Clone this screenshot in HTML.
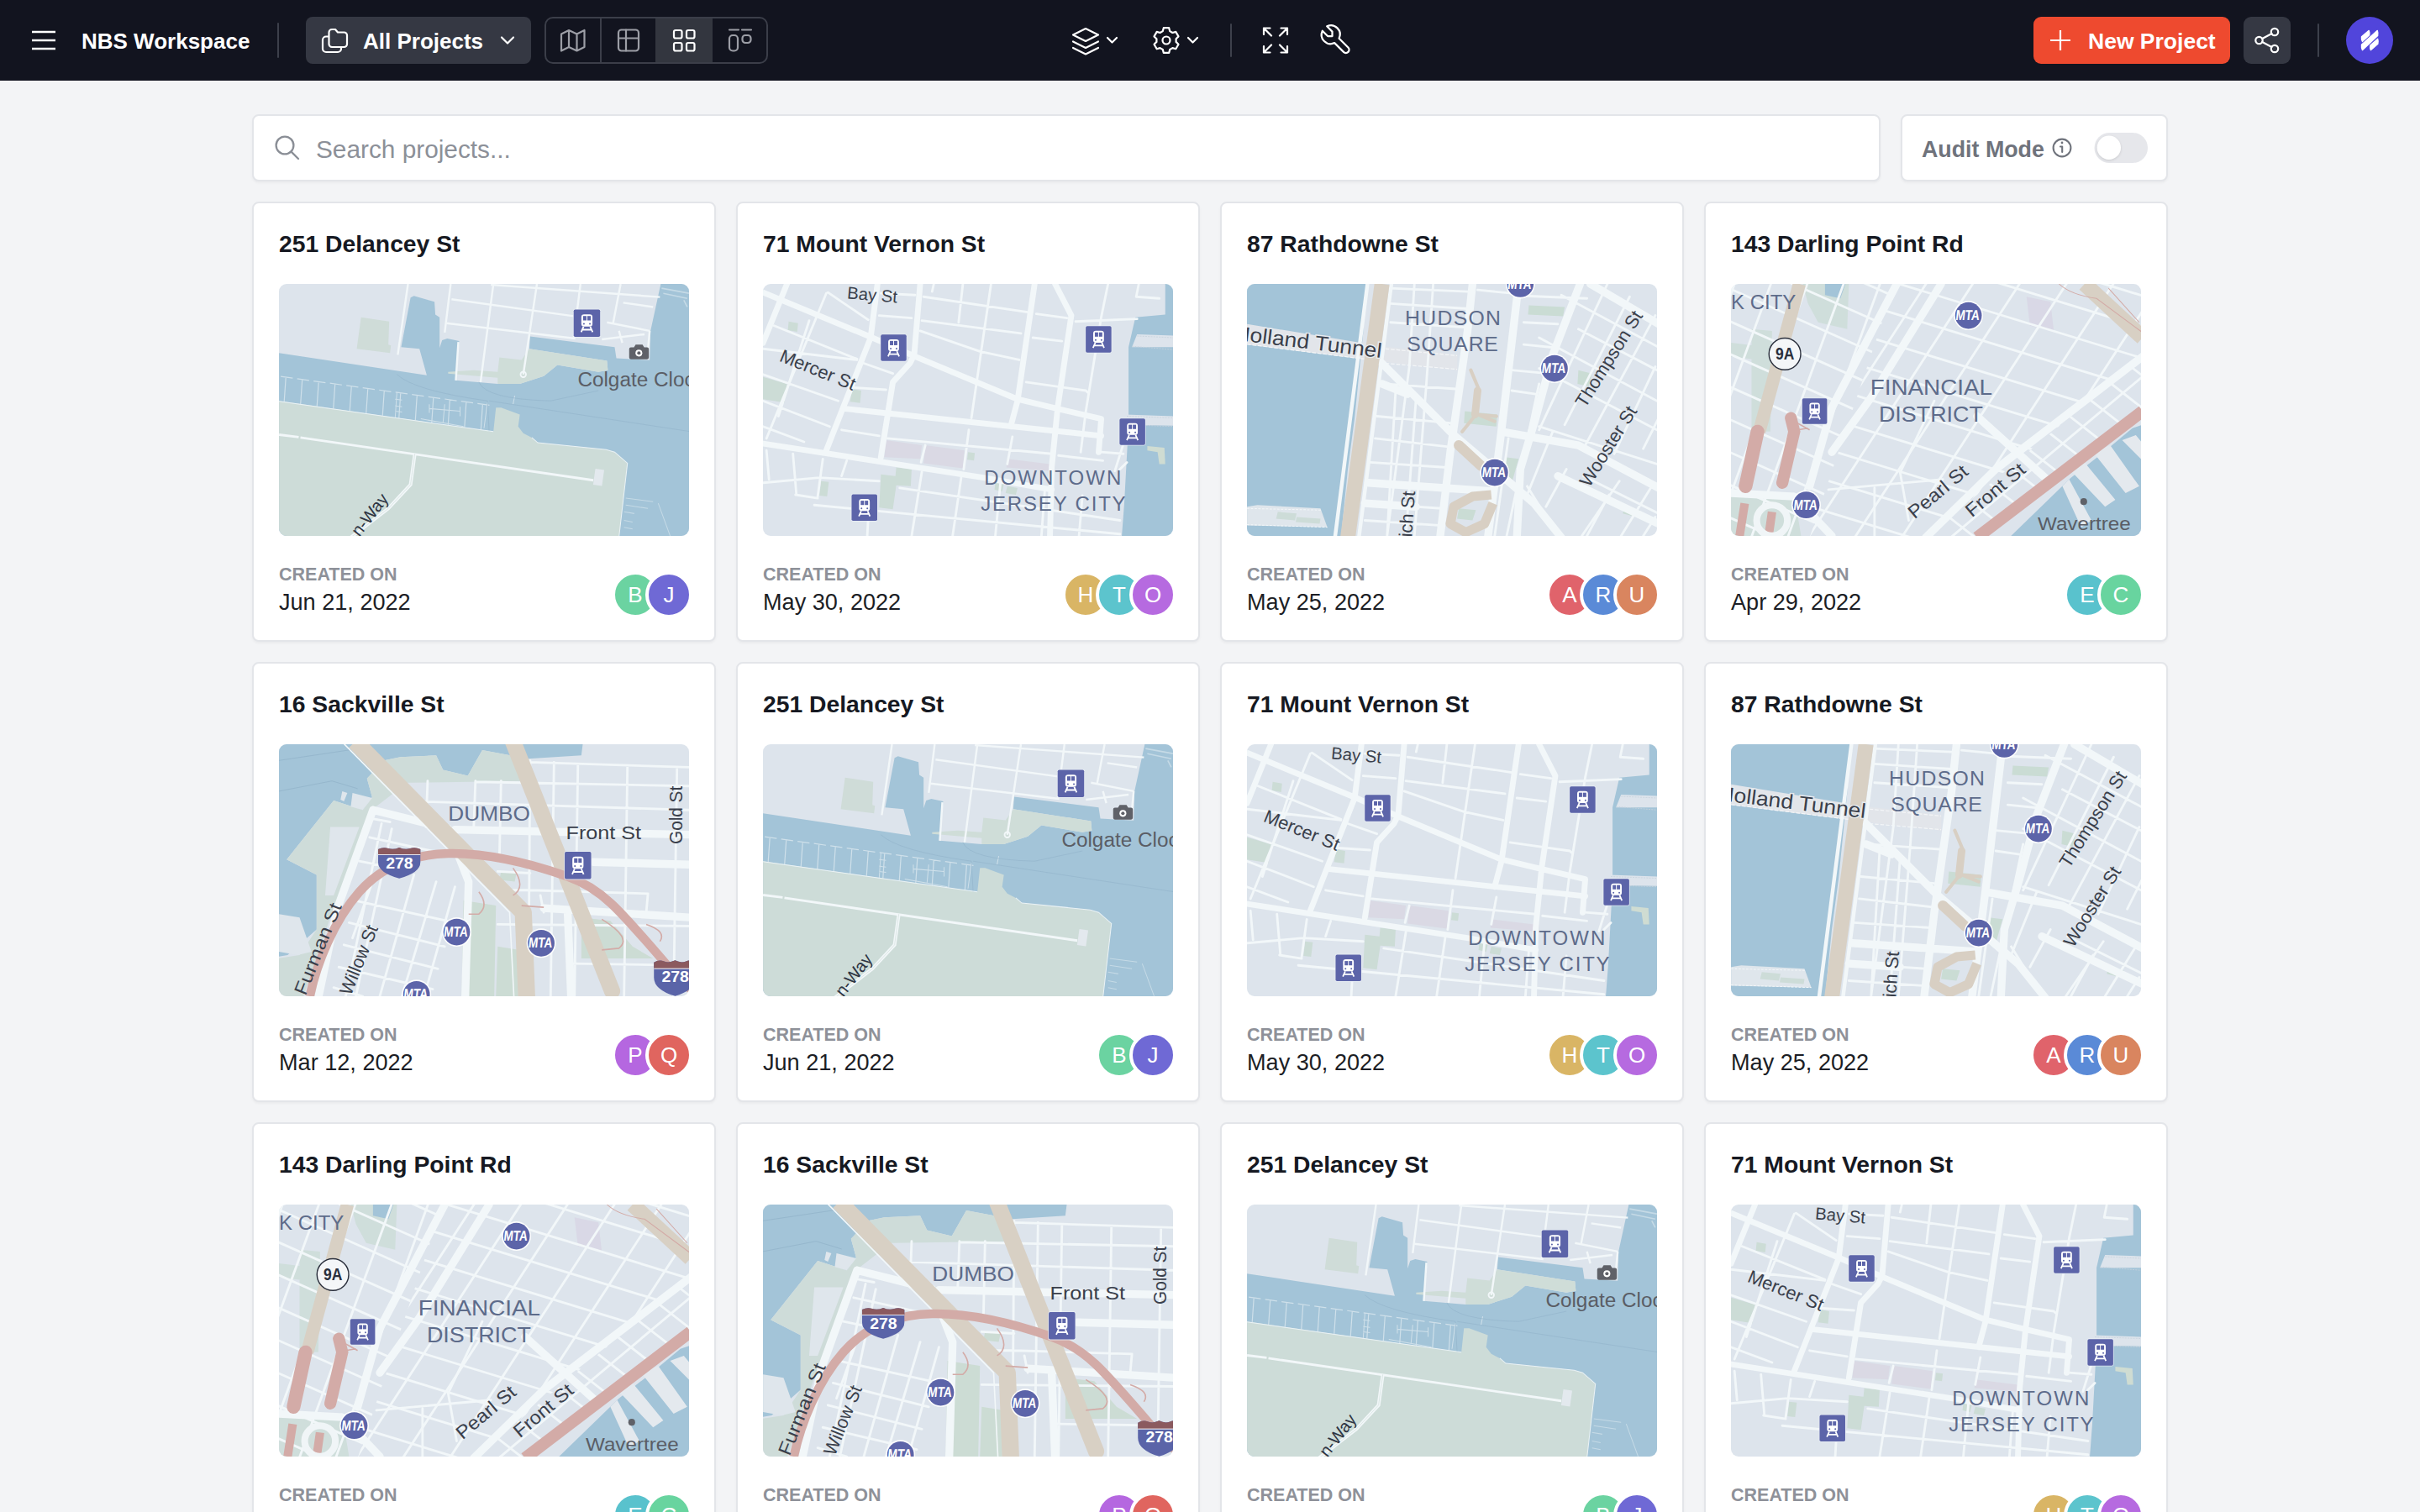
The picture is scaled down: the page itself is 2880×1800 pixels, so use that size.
<!DOCTYPE html>
<html><head><meta charset="utf-8"><style>
*{box-sizing:border-box;margin:0;padding:0}
html,body{width:2880px;height:1800px;overflow:hidden;background:#f3f4f6;font-family:"Liberation Sans", sans-serif;}
.hdr{position:absolute;left:0;top:0;width:2880px;height:96px;background:#12141f;}
.abs{position:absolute}
@media (max-width: 2000px) { html { zoom: 0.5; } }
.card{position:absolute;width:552px;height:524px;background:#fff;border:2px solid #e3e5e9;border-radius:8px;box-shadow:0 2px 3px rgba(0,0,0,0.04);}
.ttl{position:absolute;left:30px;top:27.5px;font-size:28.3px;font-weight:700;color:#161922;line-height:40px;white-space:nowrap;}
.map{position:absolute;left:30px;top:96px;width:488px;height:300px;border-radius:9px;overflow:hidden;}
.map svg{display:block}
.lbl{position:absolute;left:30px;top:428px;font-size:21.5px;font-weight:700;color:#8e9199;line-height:28px;letter-spacing:0px;white-space:nowrap}
.date{position:absolute;left:30px;top:458px;font-size:27.1px;color:#1c1e25;line-height:34px;white-space:nowrap}
.avs{position:absolute;right:26px;top:442px;height:48px;display:flex;}
.av{width:56px;height:56px;border-radius:50%;border:4px solid #fff;margin-left:-16px;color:#fff;font-size:26px;line-height:48px;text-align:center;margin-top:-4px}
.av:first-child{margin-left:0}
</style></head>
<body>
<svg width="0" height="0" style="position:absolute"><defs><symbol id="ic-train" viewBox="0 0 155 160" overflow="visible">
<rect x="-4" y="-4" width="163" height="168" rx="12" fill="#e8eef5" opacity="0.8"/>
<rect x="0" y="0" width="155" height="160" rx="9" fill="#5c64a9"/>
<rect x="45" y="28" width="65" height="72" rx="16" fill="#fff"/>
<rect x="55" y="38" width="20" height="26" fill="#5c64a9"/><rect x="80" y="38" width="20" height="26" fill="#5c64a9"/>
<circle cx="60" cy="84" r="5" fill="#5c64a9"/><circle cx="95" cy="84" r="5" fill="#5c64a9"/>
<path d="M58 100L44 132M97 100L111 132M50 118H105" stroke="#fff" stroke-width="9" fill="none"/>
</symbol><symbol id="ic-mta" viewBox="-90 -90 180 180" overflow="visible">
<circle r="86" fill="#fff" opacity="0.9"/><circle r="78" fill="#5c64a9"/>
<text x="-4" y="28" font-size="84" font-weight="700" fill="#fff" font-family="Liberation Sans" text-anchor="middle" textLength="140" lengthAdjust="spacingAndGlyphs" transform="skewX(-6)">MTA</text>
</symbol><symbol id="ic-cam" viewBox="0 0 115 90" overflow="visible">
<path d="M0 28a10 10 0 0 1 10-10h18l10-16h40l10 16h17a10 10 0 0 1 10 10v50a10 10 0 0 1-10 10h-95a10 10 0 0 1-10-10z" fill="#5f6168"/>
<circle cx="57" cy="52" r="20" fill="#fff"/><circle cx="57" cy="52" r="10" fill="#5f6168"/>
</symbol><symbol id="mapA" viewBox="10 15 2400 1476"><rect x="0" y="0" width="2420" height="1500" fill="#dde4ec"/><path fill="#a3c4d8" d="M10 420L875 550L832 395L725 385L780 95L800 85L825 92L920 120L925 195L950 210L950 390L965 345L995 335L1065 350L1045 580L1290 600L1420 600L1560 555L1640 490L1880 530L1935 520L1930 465L1475 395L1480 322L1975 385L1985 450L2180 462L2185 290L2245 15L2420 15L2420 1500L10 1500Z"/><path fill="#cddcd8" d="M10 700L1265 880L1280 740L1310 740L1420 780L1410 850L1440 890L1490 915L1525 945L1925 985L1975 1000L2050 1065L2000 1500L10 1500Z"/><path fill="#cfddd8" d="M1000 540L1290 565L1290 600L1420 600L1560 555L1640 490L1880 530L1935 520L1930 465L1475 395L1430 460L1300 445L1290 530L1150 520L1000 530Z"/><path fill="#cfdcd8" d="M490 210L655 235L650 370L665 375L660 420L465 395Z"/><path d="M50 560.0L40 705.0M20 557.0L90 567.0M146 573.2L136 718.6M116 570.2L186 580.2M242 586.4L232 732.2M212 583.4L282 593.4M338 599.6L328 745.8M308 596.6L378 606.6M434 612.8L424 759.4M404 609.8L474 619.8M530 626.0L520 773.0M500 623.0L570 633.0M626 639.2L616 786.6M596 636.2L666 646.2M722 652.4L712 800.2M692 649.4L762 659.4M818 665.6L808 813.8M788 662.6L858 672.6M914 678.8L904 827.4M884 675.8L954 685.8M1010 692.0L1000 841.0M980 689.0L1050 699.0M1106 705.2L1096 854.6M1076 702.2L1146 712.2M1202 718.4L1192 868.2M1172 715.4L1242 725.4" stroke="#cfe0ea" stroke-width="6" fill="none"/><path d="M890 745L1070 760M890 720V770M1070 735V790M980 720L970 830M840 805L1090 850M1230 710L1210 860M1390 670L1380 720M700 650L690 800M690 690L730 695M690 730L730 735M690 760L730 765" stroke="#cfe0ea" stroke-width="5" fill="none"/><path d="M700 545Q800 640 1230 700L1240 880M1180 590Q1220 690 1600 700L1880 640M1240 700L2420 880" stroke="#93b4ca" stroke-width="3" fill="none"/><path d="M10 703L1265 880M1490 915L1525 945L1925 985L1975 1000L2050 1065L2000 1500" stroke="#eaf2f5" stroke-width="5" fill="none"/><g stroke="#f2f7f9" stroke-width="12" fill="none"><path d="M765 15L705 430M1015 15L980 300M1265 15L1190 590M1520 15L1440 545M1775 15L1735 330M2010 15L1965 250"/><path d="M1250 20L2240 92M1020 105L1745 205M990 245L1745 335M2025 125L2200 150M1930 240L2180 290M1900 340L2150 310M2000 290L2020 360"/><path d="M2180 290L2165 455M1045 580L1060 355"/></g><path d="M10 898L125 912M135 915L1850 1165" stroke="#f2f7f9" stroke-width="14" fill="none"/><rect x="1855" y="1100" width="52" height="95" fill="#e3e9ee" transform="rotate(8 1880 1150)"/><path d="M805 1010L780 1190L650 1330L430 1500" stroke="#f2f7f9" stroke-width="20" fill="none"/><path d="M805 1010L780 1190L650 1330L430 1500" stroke="#d8e4e2" stroke-width="4" fill="none"/><circle cx="1440" cy="545" r="16" fill="none" stroke="#f2f7f9" stroke-width="9"/><path d="M2040 1270L2200 1290M2040 1310L2170 1330M2030 1350L2090 1360M2030 1400L2080 1410M2030 1440L2080 1450M2230 1300L2300 1491" stroke="#c5dae6" stroke-width="5" fill="none"/><path d="M2250 40L2410 70M2260 70L2400 100M2380 110L2400 150" stroke="#c5dae6" stroke-width="8" fill="none"/><use href="#ic-train" x="1735" y="165" width="155" height="160"/><use href="#ic-cam" x="2060" y="368" width="115" height="90"/><text x="1758" y="617" font-size="116" fill="#5a5d65" font-family="Liberation Sans" textLength="745" lengthAdjust="spacingAndGlyphs">Colgate Clock</text><text transform="translate(480 1500) rotate(-52)" font-size="100" fill="#2e3442" font-family="Liberation Sans">n-Way</text></symbol><symbol id="mapB" viewBox="10 15 2400 1476"><rect x="0" y="0" width="2420" height="1500" fill="#dde4ec"/><path fill="#a3c4d8" d="M2365 15L2420 15L2420 1500L2110 1500L2125 1300L2150 840L2150 385L2190 210L2365 195Z"/><path fill="#dde4ec" d="M2200 310L2420 318L2420 385L2170 385Z M2130 780L2420 790L2420 845L2125 840Z"/><path fill="#cfdcd2" d="M2260 965L2360 975L2365 1070L2330 1070L2320 1000L2260 990Z"/><path d="M2200 320L2410 330M2170 380L2410 400M2140 790L2410 800M2140 840L2410 850" stroke="#c8d3dc" stroke-width="4" stroke-dasharray="10 6" fill="none"/><path fill="#ccdcd6" d="M160 235L215 245L210 295L155 285Z M10 560L150 600L135 710L10 690Z M530 630L585 640L578 712L520 705Z M700 1130L785 1140L790 1090L880 1100L875 1200L790 1195L770 1335L690 1325Z M1210 1000L1250 1005L1245 1050L1205 1045Z M350 1170L395 1175L385 1260L340 1255Z M1370 1180L1420 1190L1410 1230L1365 1220Z M1440 1200L1500 1210L1490 1250L1430 1240Z"/><path fill="#dad9e4" d="M730 930L940 960L930 1040L720 1030Z M960 960L1190 990L1180 1095L950 1065Z M1440 1040L1690 1070L1680 1110L1435 1090Z"/><path d="M390 65L625 225M380 70L30 920M280 230L100 790M75 260L560 455M10 395L560 460M10 545L450 700M10 700L400 850M10 850L250 940M30 990L45 1160M185 1010L205 1245M360 1040L330 1260M500 1050L470 1140M10 1180L340 1150L690 1170M200 1250L330 1270M1180 15L1155 240M1345 15L1230 800M1010 15L1000 60M2030 15L1990 210L1900 760L1870 1000M2210 15L2195 90L2330 100M700 70L900 80M950 90L1560 180M1610 190L1790 215M1840 235L2200 220M690 200L880 215M940 230L1520 305M1590 330L1760 350M1280 410L1510 460M930 290L1280 410M1550 590L1900 640M1900 640L1910 650M740 920L1700 1010M1740 1020L2000 1050M470 870L690 905M600 480L770 540M510 620L730 635M960 960L935 1060M1215 870L1185 1100M1470 910L1440 1070M810 1210L2100 1400M940 1115L880 1491M1170 1150L1120 1491M1400 1180L1370 1491M1660 1220L1640 1491M1880 1255L1860 1491M630 1310L620 1491M310 1310L2100 1480M2100 1100L2140 1060M1990 1000L2120 1010M2070 1110L2130 920" stroke="#f2f7f9" stroke-width="14" fill="none" stroke-linejoin="round" stroke-linecap="round"/><path d="M150 15L10 360M10 65L650 330L900 440L1500 690L1730 745L1990 805L1975 1000M480 745L1990 905M10 950L1300 1150L1700 1220M930 15L895 430L870 480L770 590L700 1030M680 15L640 330L380 990M1600 15L1500 700L1460 850M1720 15L1815 200L1735 740L1700 1090L1690 1491" stroke="#f2f7f9" stroke-width="34" fill="none" stroke-linejoin="round" stroke-linecap="round"/><use href="#ic-train" x="697" y="312" width="155" height="155"/><use href="#ic-train" x="1897" y="262" width="155" height="155"/><use href="#ic-train" x="2095" y="803" width="155" height="155"/><use href="#ic-train" x="526" y="1248" width="155" height="155"/><text x="500" y="100" font-size="100" fill="#3a3f4b" font-family="Liberation Sans" transform="rotate(5 500 100)">Bay St</text><text x="100" y="465" font-size="108" fill="#3a3f4b" font-family="Liberation Sans" transform="rotate(22 100 465)">Mercer St</text><text x="1305" y="1190" font-size="118" fill="#5d6b8a" font-family="Liberation Sans" letter-spacing="10">DOWNTOWN</text><text x="1285" y="1345" font-size="118" fill="#5d6b8a" font-family="Liberation Sans" letter-spacing="9">JERSEY CITY</text></symbol><symbol id="mapC" viewBox="10 15 2400 1476"><rect x="0" y="0" width="2420" height="1500" fill="#dde4ec"/><path fill="#a3c4d8" d="M0 0L705 15L690 300L660 600L640 800L600 1100L560 1500L0 1500Z"/><path fill="#dfe6ec" d="M10 1320L70 1310L440 1330L480 1440L10 1430Z"/><path fill="#cddcd8" d="M190 1350L300 1360L290 1400L180 1390Z M300 1380L440 1390L435 1420L295 1410Z"/><path d="M10 1330L450 1340M10 1425L480 1440" stroke="#f2f6f8" stroke-width="5" stroke-dasharray="14 8" fill="none"/><path fill="#e2e5ea" d="M10 250L800 380L1240 430L1240 520L800 470L10 370Z"/><path d="M10 368L800 468M820 395L1240 435M820 480L1240 515" stroke="#f3f5f7" stroke-width="6" stroke-dasharray="22 10" fill="none"/><path fill="#cadcd4" d="M1660 140L1870 150L1860 205L1655 195Z M1950 520L2030 540L2010 615L1945 600Z M1285 760L1475 780L1470 850L1280 830Z M1520 1030L1600 1040L1560 1180L1510 1170Z M1250 1330L1350 1340L1330 1400L1240 1390Z M2220 1320L2310 1340L2290 1380L2210 1360Z"/><path d="M990 15L960 500L830 1491M1100 15L1060 600L990 1491M880 640L830 1491M1000 680L940 1491M845 40L1300 60M1360 50L1560 70M1630 85L2000 100M850 130L1300 160M850 240L1300 270M1630 240L1830 250M1630 370L1830 390M1560 520L1770 540M1560 640L1700 660M810 600L1230 630M770 790L1200 830M760 920L1200 970M730 1060L1180 1090M700 1300L1150 1330M700 1400L1150 1430M1720 600L1530 1491M1800 880L1650 1250M1540 920L1460 1491M2120 15L1720 870M2250 90L1870 840M2400 200L1990 960M2400 500L2160 1010M2420 800L2330 980M1850 80L2410 380M1950 280L2410 520M1720 330L2410 700M1720 510L2410 870M1720 850L2410 1070M1980 1140L2420 1360M2190 1170L1970 1491M2380 1200L2200 1491M1650 1200L1830 1491M1880 1100L1760 1320M2130 1250L2000 1491M2400 1380L2330 1491" stroke="#f2f7f9" stroke-width="14" fill="none" stroke-linejoin="round" stroke-linecap="round"/><path d="M800 480L1220 900L1480 1120L1690 1300L1850 1500M800 600L950 660M1330 15L1300 300L1200 1000L1140 1500M1600 15L1500 870L1420 1500M1960 15L1800 430L1700 800L1610 1100L1590 1500M2020 15L2420 250M1500 880L1950 960L2420 1210M1830 1140L2420 1420M720 1180L1450 1230M700 1300L1000 1320" stroke="#f2f7f9" stroke-width="46" fill="none" stroke-linejoin="round" stroke-linecap="round"/><path d="M855 15L665 1500M715 15L525 1500" stroke="#f2f7f9" stroke-width="22" fill="none" stroke-linejoin="round" stroke-linecap="round"/><path d="M800 15L600 1500" stroke="#d8d0c4" stroke-width="88" fill="none"/><path d="M1320 520L1370 640L1350 780L1270 880M1240 960L1380 1080M1360 780L1460 820M1350 780L1470 790" stroke="#d8cfc3" stroke-width="20" fill="none" stroke-linecap="round"/><path d="M1360 640L1345 780" stroke="#d8cfc3" stroke-width="44" fill="none" stroke-linecap="round"/><path d="M1250 960L1380 1080" stroke="#d8cfc3" stroke-width="60" fill="none" stroke-linecap="round"/><path d="M1440 1250L1330 1260L1220 1320L1200 1420L1290 1470L1400 1420L1450 1300" stroke="#d8cfc3" stroke-width="55" fill="none" stroke-linejoin="round"/><use href="#ic-mta" x="1720" y="420" width="180" height="180"/><use href="#ic-mta" x="1370" y="1030" width="180" height="180"/><use href="#ic-mta" x="1520" y="-75" width="180" height="180"/><text x="935" y="255" font-size="122" fill="#5d6b8a" font-family="Liberation Sans" textLength="560" lengthAdjust="spacing">HUDSON</text><text x="945" y="410" font-size="122" fill="#5d6b8a" font-family="Liberation Sans" textLength="535" lengthAdjust="spacing">SQUARE</text><text x="-70" y="342" font-size="120" fill="#3a3f4b" font-family="Liberation Sans" transform="rotate(7 -70 342)" textLength="870" lengthAdjust="spacingAndGlyphs" stroke="#e6eaee" stroke-width="14" paint-order="stroke">Holland Tunnel</text><text x="1990" y="745" font-size="108" fill="#3a3f4b" font-family="Liberation Sans" transform="rotate(-58 1990 745)">Thompson St</text><text x="2015" y="1210" font-size="108" fill="#3a3f4b" font-family="Liberation Sans" transform="rotate(-58 2015 1210)">Wooster St</text><text x="975" y="1500" font-size="108" fill="#3a3f4b" font-family="Liberation Sans" transform="rotate(-86 975 1500)">ich St</text></symbol><symbol id="mapD" viewBox="10 15 2400 1476"><rect x="0" y="0" width="2420" height="1500" fill="#dde4ec"/><path fill="#cfdedb" d="M430 15L700 15L690 280L520 240L460 130Z M130 280L250 290L240 880L130 880Z M10 360L180 380L170 460L10 440Z M10 1240L380 1250L420 1491L10 1491Z"/><path fill="#a3c4d8" d="M560 15L680 15L650 100L560 80Z"/><path fill="#d9d8e6" d="M1740 90L1880 120L1900 290L1760 260Z"/><path fill="#a3c4d8" d="M1640 1500L2000 1150L2180 1010L2360 860L2420 840L2420 1500Z"/><path fill="#e4e9ee" d="M2000 1110L2080 1060L2260 1280L2200 1320Z M2130 1000L2230 960L2400 1200L2320 1240Z M2300 930L2380 900L2420 950L2420 1050Z M1990 1160L2120 1400L2060 1440L1950 1200Z"/><clipPath id="gc1"><path d="M0 0L975 0L470 1500L0 1500Z"/></clipPath><g clip-path="url(#gc1)"><path d="M597 -5248L6078 -2808M525 -5088L6007 -2648M454 -4928L5936 -2488M383 -4768L5864 -2328M312 -4609L5793 -2168M241 -4449L5722 -2008M170 -4289L5651 -1848M98 -4129L5580 -1689M27 -3969L5508 -1529M-44 -3809L5437 -1369M-115 -3649L5366 -1209M-186 -3489L5295 -1049M-258 -3330L5224 -889M-329 -3170L5153 -729M-400 -3010L5081 -569M-471 -2850L5010 -410M-542 -2690L4939 -250M-613 -2530L4868 -90M-685 -2370L4797 70M-756 -2211L4725 230M-827 -2051L4654 390M-898 -1891L4583 550M-969 -1731L4512 710M-1041 -1571L4441 869M-1112 -1411L4370 1029M-1183 -1251L4298 1189M-1254 -1091L4227 1349M-1325 -932L4156 1509M-1396 -772L4085 1669M-1468 -612L4014 1829M-1539 -452L3943 1988M-1610 -292L3871 2148M-1681 -132L3800 2308M-1752 28L3729 2468M-1823 188L3658 2628M-1895 347L3587 2788M-1966 507L3515 2948M-2037 667L3444 3108M-2108 827L3373 3267M-2179 987L3302 3427M-2251 1147L3231 3587M-2322 1307L3160 3747M-2393 1467L3088 3907M-2464 1626L3017 4067M-2535 1786L2946 4227M-2606 1946L2875 4387M-2678 2106L2804 4546M-2749 2266L2732 4706M-2820 2426L2661 4866M-2891 2586L2590 5026M-2962 2745L2519 5186M-3034 2905L2448 5346M-3105 3065L2377 5506M-3176 3225L2305 5666M-3247 3385L2234 5825M-3318 3545L2163 5985M-3389 3705L2092 6145M-3461 3865L2021 6305M-3532 4024L1949 6465M-3603 4184L1878 6625M-3674 4344L1807 6785" stroke="#f2f7f9" stroke-width="14" fill="none"/></g><clipPath id="gc2"><path d="M0 0L975 0L470 1500L0 1500Z"/></clipPath><g clip-path="url(#gc2)"><path d="M-5417 1531L-3365 -4108M-5229 1599L-3177 -4039M-5041 1667L-2989 -3971M-4853 1736L-2801 -3902M-4665 1804L-2613 -3834M-4477 1873L-2425 -3765M-4289 1941L-2237 -3697M-4101 2009L-2049 -3629M-3913 2078L-1861 -3560M-3725 2146L-1673 -3492M-3537 2215L-1485 -3423M-3349 2283L-1297 -3355M-3161 2351L-1109 -3287M-2973 2420L-921 -3218M-2785 2488L-733 -3150M-2598 2557L-545 -3081M-2410 2625L-357 -3013M-2222 2694L-170 -2945M-2034 2762L18 -2876M-1846 2830L206 -2808M-1658 2899L394 -2739M-1470 2967L582 -2671M-1282 3036L770 -2603M-1094 3104L958 -2534M-906 3172L1146 -2466M-718 3241L1334 -2397M-530 3309L1522 -2329M-342 3378L1710 -2261M-154 3446L1898 -2192M34 3514L2086 -2124M222 3583L2274 -2055M409 3651L2462 -1987M597 3720L2650 -1919M785 3788L2837 -1850M973 3856L3025 -1782M1161 3925L3213 -1713M1349 3993L3401 -1645M1537 4062L3589 -1577M1725 4130L3777 -1508M1913 4198L3965 -1440M2101 4267L4153 -1371M2289 4335L4341 -1303M2477 4404L4529 -1235M2665 4472L4717 -1166M2853 4540L4905 -1098M3041 4609L5093 -1029M3229 4677L5281 -961M3416 4746L5469 -893M3604 4814L5657 -824M3792 4882L5844 -756M3980 4951L6032 -687M4168 5019L6220 -619M4356 5088L6408 -551M4544 5156L6596 -482M4732 5224L6784 -414M4920 5293L6972 -345M5108 5361L7160 -277M5296 5430L7348 -208M5484 5498L7536 -140M5672 5566L7724 -72M5860 5635L7912 -3" stroke="#f2f7f9" stroke-width="14" fill="none"/></g><clipPath id="gc3"><path d="M975 0L2420 0L2420 440L1150 1500L470 1500Z"/></clipPath><g clip-path="url(#gc3)"><path d="M-142 -5090L5596 -3336M-193 -4923L5545 -3169M-244 -4756L5494 -3001M-295 -4588L5443 -2834M-346 -4421L5392 -2667M-397 -4254L5340 -2499M-448 -4086L5289 -2332M-500 -3919L5238 -2165M-551 -3752L5187 -1997M-602 -3584L5136 -1830M-653 -3417L5085 -1663M-704 -3249L5034 -1495M-755 -3082L4982 -1328M-807 -2915L4931 -1161M-858 -2747L4880 -993M-909 -2580L4829 -826M-960 -2413L4778 -658M-1011 -2245L4727 -491M-1062 -2078L4675 -324M-1114 -1911L4624 -156M-1165 -1743L4573 11M-1216 -1576L4522 178M-1267 -1409L4471 346M-1318 -1241L4420 513M-1369 -1074L4368 680M-1421 -907L4317 848M-1472 -739L4266 1015M-1523 -572L4215 1182M-1574 -404L4164 1350M-1625 -237L4113 1517M-1676 -70L4061 1684M-1728 98L4010 1852M-1779 265L3959 2019M-1830 432L3908 2187M-1881 600L3857 2354M-1932 767L3806 2521M-1983 934L3754 2689M-2035 1102L3703 2856M-2086 1269L3652 3023M-2137 1436L3601 3191M-2188 1604L3550 3358M-2239 1771L3499 3525M-2290 1939L3447 3693M-2342 2106L3396 3860M-2393 2273L3345 4027M-2444 2441L3294 4195M-2495 2608L3243 4362M-2546 2775L3192 4530M-2597 2943L3140 4697M-2649 3110L3089 4864M-2700 3277L3038 5032M-2751 3445L2987 5199M-2802 3612L2936 5366M-2853 3779L2885 5534M-2904 3947L2833 5701M-2956 4114L2782 5868M-3007 4281L2731 6036M-3058 4449L2680 6203M-3109 4616L2629 6370M-3160 4784L2578 6538M-3211 4951L2526 6705" stroke="#f2f7f9" stroke-width="14" fill="none"/></g><clipPath id="gc4"><path d="M975 0L2420 0L2420 440L1150 1500L470 1500Z"/></clipPath><g clip-path="url(#gc4)"><path d="M-6202 -487L-2935 -5519M-6009 -361L-2742 -5393M-5817 -236L-2549 -5268M-5624 -111L-2356 -5143M-5431 15L-2163 -5018M-5238 140L-1970 -4892M-5045 265L-1777 -4767M-4852 390L-1584 -4642M-4659 516L-1391 -4516M-4466 641L-1198 -4391M-4273 766L-1006 -4266M-4081 891L-813 -4141M-3888 1017L-620 -4015M-3695 1142L-427 -3890M-3502 1267L-234 -3765M-3309 1392L-41 -3640M-3116 1518L152 -3514M-2923 1643L345 -3389M-2730 1768L538 -3264M-2537 1894L730 -3139M-2344 2019L923 -3013M-2152 2144L1116 -2888M-1959 2269L1309 -2763M-1766 2395L1502 -2637M-1573 2520L1695 -2512M-1380 2645L1888 -2387M-1187 2770L2081 -2262M-994 2896L2274 -2136M-801 3021L2467 -2011M-608 3146L2659 -1886M-416 3271L2852 -1761M-223 3397L3045 -1635M-30 3522L3238 -1510M163 3647L3431 -1385M356 3773L3624 -1259M549 3898L3817 -1134M742 4023L4010 -1009M935 4148L4203 -884M1128 4274L4395 -758M1321 4399L4588 -633M1513 4524L4781 -508M1706 4649L4974 -383M1899 4775L5167 -257M2092 4900L5360 -132M2285 5025L5553 -7M2478 5150L5746 118M2671 5276L5939 244M2864 5401L6132 369M3057 5526L6324 494M3249 5652L6517 620M3442 5777L6710 745M3635 5902L6903 870M3828 6027L7096 995M4021 6153L7289 1121M4214 6278L7482 1246M4407 6403L7675 1371M4600 6528L7868 1496M4793 6654L8060 1622M4986 6779L8253 1747M5178 6904L8446 1872M5371 7029L8639 1997" stroke="#f2f7f9" stroke-width="14" fill="none"/></g><clipPath id="gc5"><path d="M2420 440L2420 760L1450 1500L1150 1500Z"/></clipPath><g clip-path="url(#gc5)"><path d="M1616 -4643L6345 -949M1524 -4525L6252 -831M1432 -4407L6160 -713M1339 -4288L6067 -594M1247 -4170L5975 -476M1155 -4052L5883 -358M1062 -3934L5790 -240M970 -3816L5698 -122M878 -3697L5606 -3M785 -3579L5513 115M693 -3461L5421 233M601 -3343L5329 351M508 -3225L5236 469M416 -3106L5144 588M324 -2988L5052 706M231 -2870L4959 824M139 -2752L4867 942M47 -2634L4775 1060M-46 -2515L4682 1179M-138 -2397L4590 1297M-231 -2279L4498 1415M-323 -2161L4405 1533M-415 -2043L4313 1651M-508 -1924L4220 1770M-600 -1806L4128 1888M-692 -1688L4036 2006M-785 -1570L3943 2124M-877 -1452L3851 2242M-969 -1333L3759 2361M-1062 -1215L3666 2479M-1154 -1097L3574 2597M-1246 -979L3482 2715M-1339 -861L3389 2833M-1431 -742L3297 2952M-1523 -624L3205 3070M-1616 -506L3112 3188M-1708 -388L3020 3306M-1800 -270L2928 3424M-1893 -151L2835 3543M-1985 -33L2743 3661M-2078 85L2651 3779M-2170 203L2558 3897M-2262 321L2466 4015M-2355 440L2373 4134M-2447 558L2281 4252M-2539 676L2189 4370M-2632 794L2096 4488M-2724 912L2004 4606M-2816 1031L1912 4725M-2909 1149L1819 4843M-3001 1267L1727 4961M-3093 1385L1635 5079M-3186 1503L1542 5197M-3278 1622L1450 5316M-3370 1740L1358 5434M-3463 1858L1265 5552M-3555 1976L1173 5670M-3647 2094L1081 5788M-3740 2213L988 5907M-3832 2331L896 6025M-3925 2449L804 6143" stroke="#f2f7f9" stroke-width="14" fill="none"/></g><clipPath id="gc6"><path d="M2420 440L2420 760L1450 1500L1150 1500Z"/></clipPath><g clip-path="url(#gc6)"><path d="M-3961 -746L635 -4603M-3865 -631L731 -4488M-3769 -516L828 -4373M-3672 -401L924 -4258M-3576 -286L1021 -4143M-3479 -171L1117 -4028M-3383 -56L1213 -3913M-3286 58L1310 -3798M-3190 173L1406 -3683M-3094 288L1503 -3568M-2997 403L1599 -3454M-2901 518L1695 -3339M-2804 633L1792 -3224M-2708 748L1888 -3109M-2612 863L1985 -2994M-2515 978L2081 -2879M-2419 1093L2178 -2764M-2322 1208L2274 -2649M-2226 1322L2370 -2534M-2129 1437L2467 -2419M-2033 1552L2563 -2304M-1937 1667L2660 -2190M-1840 1782L2756 -2075M-1744 1897L2852 -1960M-1647 2012L2949 -1845M-1551 2127L3045 -1730M-1455 2242L3142 -1615M-1358 2357L3238 -1500M-1262 2472L3335 -1385M-1165 2586L3431 -1270M-1069 2701L3527 -1155M-972 2816L3624 -1040M-876 2931L3720 -926M-780 3046L3817 -811M-683 3161L3913 -696M-587 3276L4010 -581M-490 3391L4106 -466M-394 3506L4202 -351M-298 3621L4299 -236M-201 3736L4395 -121M-105 3850L4492 -6M-8 3965L4588 109M88 4080L4684 223M185 4195L4781 338M281 4310L4877 453M377 4425L4974 568M474 4540L5070 683M570 4655L5167 798M667 4770L5263 913M763 4885L5359 1028M860 4999L5456 1143M956 5114L5552 1258M1052 5229L5649 1373M1149 5344L5745 1487M1245 5459L5841 1602M1342 5574L5938 1717M1438 5689L6034 1832M1534 5804L6131 1947M1631 5919L6227 2062M1727 6034L6324 2177M1824 6149L6420 2292" stroke="#f2f7f9" stroke-width="14" fill="none"/></g><path d="M1200 700L1000 1120L1050 1400M580 1220L1250 1160M850 1210L850 1491" stroke="#f2f7f9" stroke-width="14" fill="none" stroke-linejoin="round" stroke-linecap="round"/><path d="M980 15L600 740L470 1200M1240 15L830 680L600 1000M10 1240L380 1260M2420 440L1560 1100L1150 1500M1450 790L1860 1160M380 1260L600 1491" stroke="#f2f7f9" stroke-width="46" fill="none" stroke-linejoin="round" stroke-linecap="round"/><path d="M410 15L175 880" stroke="#d8d0c4" stroke-width="76" fill="none"/><path d="M2080 15L2420 330" stroke="#d8d0c4" stroke-width="90" fill="none"/><path d="M1930 15Q2000 80 2150 100L2420 300M2220 40L2400 240" stroke="#d3aaa6" stroke-width="5" fill="none"/><path d="M165 880L95 1200" stroke="#d3aba7" stroke-width="80" fill="none" stroke-linecap="round"/><path d="M360 800L380 880L310 1180" stroke="#d3aba7" stroke-width="70" fill="none" stroke-linecap="round"/><path d="M400 870L460 860M380 820L470 870" stroke="#d3aba7" stroke-width="8" fill="none"/><path d="M2420 760L1450 1500" stroke="#d3aba7" stroke-width="70" fill="none"/><path d="M60 1491L90 1300M230 1491L250 1350" stroke="#d3aba7" stroke-width="50" fill="none"/><circle cx="250" cy="1400" r="90" fill="none" stroke="#f0f5f7" stroke-width="40"/><circle cx="325" cy="425" r="93" fill="#f4f6f8" stroke="#2a2f3c" stroke-width="7"/><text x="325" y="460" font-size="100" font-weight="700" fill="#2a2f3c" font-family="Liberation Sans" text-anchor="middle" textLength="110" lengthAdjust="spacingAndGlyphs">9A</text><use href="#ic-train" x="422" y="685" width="155" height="150"/><use href="#ic-mta" x="1310" y="110" width="180" height="180"/><use href="#ic-mta" x="360" y="1220" width="180" height="180"/><circle cx="2075" cy="1290" r="20" fill="#5f6168"/><text x="10" y="165" font-size="120" fill="#5d6b8a" font-family="Liberation Sans" textLength="380" lengthAdjust="spacingAndGlyphs">K CITY</text><text x="825" y="665" font-size="125" fill="#5d6b8a" font-family="Liberation Sans" textLength="715" lengthAdjust="spacingAndGlyphs">FINANCIAL</text><text x="875" y="820" font-size="125" fill="#5d6b8a" font-family="Liberation Sans" textLength="610" lengthAdjust="spacingAndGlyphs">DISTRICT</text><text x="1805" y="1455" font-size="112" fill="#5a5d65" font-family="Liberation Sans" textLength="545" lengthAdjust="spacingAndGlyphs">Wavertree</text><text x="1085" y="1395" font-size="110" fill="#3a3f4b" font-family="Liberation Sans" textLength="420" lengthAdjust="spacingAndGlyphs" transform="rotate(-40 1085 1395)">Pearl St</text><text x="1420" y="1385" font-size="110" fill="#3a3f4b" font-family="Liberation Sans" textLength="420" lengthAdjust="spacingAndGlyphs" transform="rotate(-40 1420 1385)">Front St</text></symbol><symbol id="mapE" viewBox="10 15 2400 1476"><rect x="0" y="0" width="2420" height="1500" fill="#dde4ec"/><path fill="#a3c4d8" d="M0 0L1790 0L1780 80L1470 100L1200 50L1115 200L970 165L930 80L720 90L625 110L525 215L555 325L500 400L330 345L55 690L230 780L230 1100L60 1250L0 1260Z"/><path fill="#cedcd9" d="M55 690L330 345L500 400L555 325L525 215L625 110L720 90L930 80L970 165L1115 200L1200 50L1470 100L1480 230L760 240L540 410L320 1000L150 1500L0 1500L0 1270L130 1250L230 1100L230 780Z"/><path d="M10 110L480 40M10 290L320 230L470 275" stroke="#93b4ca" stroke-width="4" fill="none"/><path fill="#dfe6ec" d="M440 300L555 330L500 400L430 380Z M380 290L410 300L390 350L370 340Z"/><path fill="#dfe6ec" d="M310 500L480 500L330 900L280 900Z M10 1010L130 1030L200 1230L120 1250L10 1230Z"/><path fill="#ccdcd4" d="M1090 930L1280 960L1270 1491L1080 1491Z M1290 1200L1420 1220L1410 1491L1280 1491Z M1780 1030L1950 1050L2080 1200L2200 1270L1780 1270Z M1310 760L1400 770L1390 820L1300 810Z"/><path d="M1480 110L1470 1491M1620 120L1600 1491M1760 130L1740 1491M2050 140L2030 1491M2340 160L2320 1491M1160 230L1150 500M1310 230L1300 700M880 230L870 500M1480 120L2410 150M1160 235L2410 260M840 350L2410 400M1480 870L2170 890L2160 1000M1300 870L1480 870M1290 1070L2410 1080M1730 1300L2410 1310M1290 760L1480 770M1540 900L1560 1000M550 450L660 470M540 560L1040 670M480 700L780 760M450 930L1040 1060M420 1060L980 1200M390 1190L940 1330M360 1320L910 1450M330 1440L500 1491M610 480L400 1491M670 510L460 1491M800 780L600 1491M930 820L730 1491M1040 850L860 1491M560 810L440 1150" stroke="#f2f7f9" stroke-width="14" fill="none" stroke-linejoin="round" stroke-linecap="round"/><path d="M560 400L1000 510L1120 820L1100 1500M1040 515L2420 545M1850 705L2420 720M1560 975L2420 1030M560 400L350 980L240 1500M1700 1000L1720 1500" stroke="#f2f7f9" stroke-width="46" fill="none" stroke-linejoin="round" stroke-linecap="round"/><path d="M455 0L1440 1000L1460 1500" stroke="#d8d0c4" stroke-width="100" fill="none" stroke-linejoin="round"/><path d="M1380 0L1960 1460" stroke="#d8d0c4" stroke-width="95" fill="none" stroke-linecap="round"/><path d="M378 0L1360 1000L1385 1491" stroke="#f2f7f9" stroke-width="8" fill="none"/><path d="M190 1491C230 1300 330 1050 480 880C620 720 800 660 1000 655C1250 650 1500 720 1700 790C1900 860 2000 980 2300 1330L2420 1450" stroke="#d3aba7" stroke-width="52" fill="none" stroke-linejoin="round"/><path d="M1380 740Q1460 850 1380 900M1180 880Q1240 960 1180 1010L1120 1010M1900 1040Q2080 1150 2000 1210L1900 1220M2160 1070Q2280 1110 2240 1170M1430 960L1560 970" stroke="#d3aba7" stroke-width="8" fill="none"/><g transform="translate(590 615) scale(0.99 0.51)"><path d="M0 30Q30 0 60 20Q90 40 125 10Q160 40 190 20Q220 0 250 30L250 180Q250 300 125 365Q0 300 0 180Z" fill="#5a64a8"/><path d="M0 30Q30 0 60 20Q90 40 125 10Q160 40 190 20Q220 0 250 30L250 90L0 90Z" fill="#8b5a5f"/><rect x="0" y="88" width="250" height="8" fill="#fff"/></g><text x="715" y="745" font-size="90" font-weight="700" fill="#fff" font-family="Liberation Sans" text-anchor="middle" textLength="160" lengthAdjust="spacingAndGlyphs">278</text><g transform="translate(2205 1275) scale(0.99 0.59)"><path d="M0 30Q30 0 60 20Q90 40 125 10Q160 40 190 20Q220 0 250 30L250 180Q250 300 125 365Q0 300 0 180Z" fill="#5a64a8"/><path d="M0 30Q30 0 60 20Q90 40 125 10Q160 40 190 20Q220 0 250 30L250 90L0 90Z" fill="#8b5a5f"/><rect x="0" y="88" width="250" height="8" fill="#fff"/></g><text x="2330" y="1405" font-size="90" font-weight="700" fill="#fff" font-family="Liberation Sans" text-anchor="middle" textLength="160" lengthAdjust="spacingAndGlyphs">278</text><use href="#ic-train" x="1680" y="645" width="160" height="160"/><use href="#ic-mta" x="960" y="1025" width="180" height="180"/><use href="#ic-mta" x="1455" y="1090" width="180" height="180"/><use href="#ic-mta" x="725" y="1390" width="180" height="180"/><text x="1000" y="465" font-size="120" fill="#5d6b8a" font-family="Liberation Sans" textLength="480" lengthAdjust="spacingAndGlyphs">DUMBO</text><text x="1690" y="570" font-size="112" fill="#3a3f4b" font-family="Liberation Sans" textLength="440" lengthAdjust="spacingAndGlyphs">Front St</text><text x="2370" y="600" font-size="105" fill="#3a3f4b" font-family="Liberation Sans" textLength="340" lengthAdjust="spacingAndGlyphs" transform="rotate(-90 2370 600)">Gold St</text><text x="165" y="1491" font-size="108" fill="#3a3f4b" font-family="Liberation Sans" textLength="570" lengthAdjust="spacingAndGlyphs" transform="rotate(-68 165 1491)">Furman St</text><text x="430" y="1491" font-size="108" fill="#3a3f4b" font-family="Liberation Sans" textLength="430" lengthAdjust="spacingAndGlyphs" transform="rotate(-68 430 1491)">Willow St</text></symbol></defs></svg>
<div class="hdr">
<svg class="abs" style="left:0;top:0" width="2880" height="96" viewBox="0 0 2880 96" fill="none" stroke-linecap="round" stroke-linejoin="round">
 <!-- hamburger -->
 <g stroke="#fff" stroke-width="2.3" stroke-linecap="butt"><path d="M38 38H66M38 48H66M38 58H66"/></g>
 <!-- divider -->
 <path d="M331 28V68" stroke="#3d404b" stroke-width="2"/>
 <!-- all projects button -->
 <rect x="364" y="20" width="268" height="56" rx="8" fill="#353843"/>
 <g stroke="#fff" stroke-width="2.2">
  <path d="M384 47.5a4 4 0 0 1 4-4h14a4 4 0 0 1 4 4v10.5a4 4 0 0 1-4 4h-14a4 4 0 0 1-4-4z"/>
  <path fill="#353843" d="M391.5 52.5V38.5a3.5 3.5 0 0 1 3.5-3.5h4l3 3.5h7.5a3.5 3.5 0 0 1 3.5 3.5V52.5a3.5 3.5 0 0 1-3.5 3.5h-14.5a3.5 3.5 0 0 1-3.5-3.5z"/>
  <path d="M597 44.5l7 7 7-7"/>
 </g>
 <!-- view group -->
 <rect x="780" y="20" width="68" height="56" fill="#33363f"/>
 <rect x="649" y="21" width="264" height="54" rx="9" stroke="#3b3e49" stroke-width="2"/>
 <path d="M715 21V75" stroke="#3b3e49" stroke-width="2"/>
 <g stroke="#9c9ea6" stroke-width="2.2">
  <path d="M668 40.5L677 36L686.5 40.5L695.5 36V56L686.5 60.5L677 56L668 60.5Z M677 36V56 M686.5 40.5V60.5"/>
  <rect x="736" y="35.5" width="24" height="25" rx="3.5"/><path d="M736 45.5h24 M745 35.5v25"/>
  <path d="M868 35.5h11 M883 35.5h11"/>
  <rect x="868" y="42" width="10" height="18.5" rx="4"/><rect x="883.5" y="42" width="10" height="9" rx="3.5"/>
 </g>
 <g stroke="#fff" stroke-width="2.2">
  <rect x="802" y="36" width="9.5" height="9.5" rx="2"/><rect x="817" y="36" width="9.5" height="9.5" rx="2"/>
  <rect x="802" y="51" width="9.5" height="9.5" rx="2"/><rect x="817" y="51" width="9.5" height="9.5" rx="2"/>
 </g>
 <!-- layers -->
 <g stroke="#fff" stroke-width="2.2">
  <path d="M1292 34l15 7.5-15 7.5-15-7.5z"/>
  <path d="M1277 49.5l15 7.5 15-7.5 M1277 57l15 7.5 15-7.5"/>
  <path d="M1318 45l5.5 5.5 5.5-5.5"/>
  <!-- gear -->
  <circle cx="1388" cy="48" r="4.5"/>
  <path d="M1384.8 33.2h6.4l1 3.9 3.2 1.85 3.9-1.1 3.2 5.55-2.9 2.8v3.7l2.9 2.8-3.2 5.55-3.9-1.1-3.2 1.85-1 3.9h-6.4l-1-3.9-3.2-1.85-3.9 1.1-3.2-5.55 2.9-2.8v-3.7l-2.9-2.8 3.2-5.55 3.9 1.1 3.2-1.85z"/>
  <path d="M1414 45l5.5 5.5 5.5-5.5"/>
 </g>
 <path d="M1465 29V67" stroke="#3d404b" stroke-width="2"/>
 <!-- expand -->
 <g stroke="#fff" stroke-width="2.2">
  <path d="M1504 41v-7.5h7.5 M1504 33.5l9 9 M1532 41v-7.5h-7.5 M1532 33.5l-9 9 M1504 55v7.5h7.5 M1504 62.5l9-9 M1532 55v7.5h-7.5 M1532 62.5l-9-9"/>
  <!-- wrench -->
  <path transform="translate(1567.5,25) scale(1.8)" stroke-width="1.25" d="M7 10h3v-3l-3.5 -3.5a6 6 0 0 1 8 8l6 6a2 2 0 0 1 -3 3l-6 -6a6 6 0 0 1 -8 -8l3.5 3.5"/>
 </g>
 <!-- new project -->
 <rect x="2420" y="20" width="234" height="56" rx="9" fill="#ee4a2f"/>
 <path d="M2452 36v24 M2440 48h24" stroke="#fff" stroke-width="2.2" stroke-linecap="butt"/>
 <!-- share -->
 <rect x="2670" y="20" width="56" height="56" rx="9" fill="#353843"/>
 <g stroke="#fff" stroke-width="2.2">
  <circle cx="2707" cy="38" r="4.2"/><circle cx="2688.5" cy="48" r="4.2"/><circle cx="2707" cy="58" r="4.2"/>
  <path d="M2692.3 46l11.2-6 M2692.3 50l11.2 6"/>
 </g>
 <path d="M2759 29V67" stroke="#3d404b" stroke-width="2"/>
 <circle cx="2820" cy="48" r="28" fill="#5145db"/>
 <g fill="#fff" stroke="#fff" stroke-width="1.2" stroke-linejoin="round">
  <path d="M2810.4 43.6L2819.2 36.3Q2820.3 38.5 2819.8 41.8L2811.4 49.5Q2810 47 2810.4 43.6z"/>
  <path d="M2810.4 53.1L2829.3 36.3Q2830.3 38.8 2829.7 42.6L2811.4 59.7Q2810 57 2810.4 53.1z"/>
  <path d="M2820.8 53.9L2829.7 46.2Q2830.6 48.8 2829.9 52.3L2821.3 59.7Q2820.1 57 2820.8 53.9z"/>
 </g>
</svg>
<div class="abs" style="left:97px;top:33px;font-size:26px;font-weight:700;color:#fff;line-height:32px;white-space:nowrap">NBS Workspace</div>
<div class="abs" style="left:432px;top:33px;font-size:26px;font-weight:700;color:#fff;line-height:32px;white-space:nowrap">All Projects</div>
<div class="abs" style="left:2485px;top:33px;font-size:26.5px;font-weight:700;color:#fff;line-height:32px;white-space:nowrap">New Project</div>
</div>
<div class="abs" style="left:300px;top:136px;width:1938px;height:80px;background:#fff;border:2px solid #e3e5e9;border-radius:8px;box-shadow:0 2px 3px rgba(0,0,0,0.04)"></div>
<svg class="abs" style="left:300px;top:136px" width="100" height="80" viewBox="300 136 100 80" fill="none" stroke="#8a8e96" stroke-width="2.3" stroke-linecap="round"><circle cx="339" cy="173" r="10.4"/><path d="M346.6 180.6L355 189"/></svg>
<div class="abs" style="left:376px;top:161px;font-size:29.8px;color:#8c9098;line-height:34px;white-space:nowrap">Search projects...</div>
<div class="abs" style="left:2262px;top:136px;width:318px;height:80px;background:#fff;border:2px solid #e3e5e9;border-radius:8px;box-shadow:0 2px 3px rgba(0,0,0,0.04)"></div>
<div class="abs" style="left:2287px;top:161.5px;font-size:26.8px;font-weight:700;color:#6f737c;line-height:32px;white-space:nowrap">Audit Mode</div>
<svg class="abs" style="left:2430px;top:150px" width="140" height="56" viewBox="2430 150 140 56" fill="none">
 <circle cx="2454" cy="176" r="10.4" stroke="#6f737c" stroke-width="2.1"/>
 <path d="M2452 174.5h2.2v6.5" stroke="#6f737c" stroke-width="2.1" stroke-linecap="round" stroke-linejoin="round"/>
 <circle cx="2454" cy="170" r="1.4" fill="#6f737c"/>
 <rect x="2492.5" y="158" width="63.5" height="36" rx="18" fill="#e6e7eb"/>
 <circle cx="2509.8" cy="175.8" r="14.2" fill="#fff" style="filter:drop-shadow(0 1px 1.5px rgba(0,0,0,0.12))"/>
</svg>
<div class="card" style="left:300px;top:240px">
<div class="ttl">251 Delancey St</div>
<div class="map"><svg width="488" height="300" viewBox="0 0 488 300"><use href="#mapA" x="0" y="0" width="488" height="300"/></svg></div>
<div class="lbl">CREATED ON</div>
<div class="date">Jun 21, 2022</div>
<div class="avs"><div class="av" style="background:#6bd3a1">B</div><div class="av" style="background:#6f69d5">J</div></div>
</div><div class="card" style="left:876px;top:240px">
<div class="ttl">71 Mount Vernon St</div>
<div class="map"><svg width="488" height="300" viewBox="0 0 488 300"><use href="#mapB" x="0" y="0" width="488" height="300"/></svg></div>
<div class="lbl">CREATED ON</div>
<div class="date">May 30, 2022</div>
<div class="avs"><div class="av" style="background:#d9b565">H</div><div class="av" style="background:#5cc4cd">T</div><div class="av" style="background:#b66ae0">O</div></div>
</div><div class="card" style="left:1452px;top:240px">
<div class="ttl">87 Rathdowne St</div>
<div class="map"><svg width="488" height="300" viewBox="0 0 488 300"><use href="#mapC" x="0" y="0" width="488" height="300"/></svg></div>
<div class="lbl">CREATED ON</div>
<div class="date">May 25, 2022</div>
<div class="avs"><div class="av" style="background:#e0636b">A</div><div class="av" style="background:#5a8ad7">R</div><div class="av" style="background:#d9855f">U</div></div>
</div><div class="card" style="left:2028px;top:240px">
<div class="ttl">143 Darling Point Rd</div>
<div class="map"><svg width="488" height="300" viewBox="0 0 488 300"><use href="#mapD" x="0" y="0" width="488" height="300"/></svg></div>
<div class="lbl">CREATED ON</div>
<div class="date">Apr 29, 2022</div>
<div class="avs"><div class="av" style="background:#59c2cd">E</div><div class="av" style="background:#68d49f">C</div></div>
</div><div class="card" style="left:300px;top:788px">
<div class="ttl">16 Sackville St</div>
<div class="map"><svg width="488" height="300" viewBox="0 0 488 300"><use href="#mapE" x="0" y="0" width="488" height="300"/></svg></div>
<div class="lbl">CREATED ON</div>
<div class="date">Mar 12, 2022</div>
<div class="avs"><div class="av" style="background:#b567e0">P</div><div class="av" style="background:#e0655f">Q</div></div>
</div><div class="card" style="left:876px;top:788px">
<div class="ttl">251 Delancey St</div>
<div class="map"><svg width="488" height="300" viewBox="0 0 488 300"><use href="#mapA" x="0" y="0" width="488" height="300"/></svg></div>
<div class="lbl">CREATED ON</div>
<div class="date">Jun 21, 2022</div>
<div class="avs"><div class="av" style="background:#6bd3a1">B</div><div class="av" style="background:#6f69d5">J</div></div>
</div><div class="card" style="left:1452px;top:788px">
<div class="ttl">71 Mount Vernon St</div>
<div class="map"><svg width="488" height="300" viewBox="0 0 488 300"><use href="#mapB" x="0" y="0" width="488" height="300"/></svg></div>
<div class="lbl">CREATED ON</div>
<div class="date">May 30, 2022</div>
<div class="avs"><div class="av" style="background:#d9b565">H</div><div class="av" style="background:#5cc4cd">T</div><div class="av" style="background:#b66ae0">O</div></div>
</div><div class="card" style="left:2028px;top:788px">
<div class="ttl">87 Rathdowne St</div>
<div class="map"><svg width="488" height="300" viewBox="0 0 488 300"><use href="#mapC" x="0" y="0" width="488" height="300"/></svg></div>
<div class="lbl">CREATED ON</div>
<div class="date">May 25, 2022</div>
<div class="avs"><div class="av" style="background:#e0636b">A</div><div class="av" style="background:#5a8ad7">R</div><div class="av" style="background:#d9855f">U</div></div>
</div><div class="card" style="left:300px;top:1336px">
<div class="ttl">143 Darling Point Rd</div>
<div class="map"><svg width="488" height="300" viewBox="0 0 488 300"><use href="#mapD" x="0" y="0" width="488" height="300"/></svg></div>
<div class="lbl">CREATED ON</div>
<div class="date">Apr 29, 2022</div>
<div class="avs"><div class="av" style="background:#59c2cd">E</div><div class="av" style="background:#68d49f">C</div></div>
</div><div class="card" style="left:876px;top:1336px">
<div class="ttl">16 Sackville St</div>
<div class="map"><svg width="488" height="300" viewBox="0 0 488 300"><use href="#mapE" x="0" y="0" width="488" height="300"/></svg></div>
<div class="lbl">CREATED ON</div>
<div class="date">Mar 12, 2022</div>
<div class="avs"><div class="av" style="background:#b567e0">P</div><div class="av" style="background:#e0655f">Q</div></div>
</div><div class="card" style="left:1452px;top:1336px">
<div class="ttl">251 Delancey St</div>
<div class="map"><svg width="488" height="300" viewBox="0 0 488 300"><use href="#mapA" x="0" y="0" width="488" height="300"/></svg></div>
<div class="lbl">CREATED ON</div>
<div class="date">Jun 21, 2022</div>
<div class="avs"><div class="av" style="background:#6bd3a1">B</div><div class="av" style="background:#6f69d5">J</div></div>
</div><div class="card" style="left:2028px;top:1336px">
<div class="ttl">71 Mount Vernon St</div>
<div class="map"><svg width="488" height="300" viewBox="0 0 488 300"><use href="#mapB" x="0" y="0" width="488" height="300"/></svg></div>
<div class="lbl">CREATED ON</div>
<div class="date">May 30, 2022</div>
<div class="avs"><div class="av" style="background:#d9b565">H</div><div class="av" style="background:#5cc4cd">T</div><div class="av" style="background:#b66ae0">O</div></div>
</div>
</body></html>
